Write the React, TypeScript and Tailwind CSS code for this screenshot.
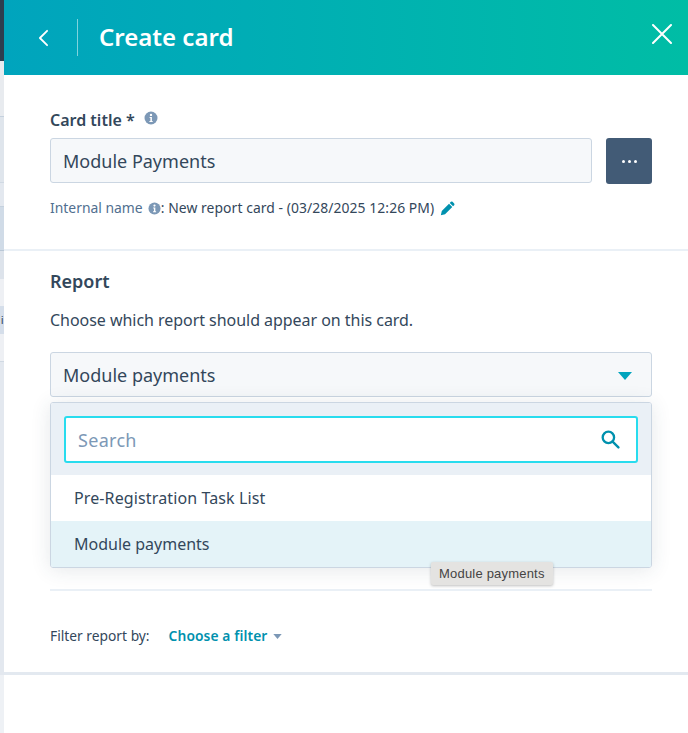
import React from "react";

const font = "font-['Noto_Sans','Open_Sans',sans-serif]";

function Info({ className }: { className: string }) {
  return (
    <svg viewBox="0 0 14 14" className={className}>
      <circle cx="7" cy="7" r="6.5" fill="currentColor" />
      <circle cx="7" cy="3.9" r="1.2" fill="#fff" />
      <path d="M5.6 6h2.3v4h.8v1.1H5.4V10h1V7.1h-.8z" fill="#fff" />
    </svg>
  );
}

function Strip() {
  return (
    <div className="w-1 shrink-0 flex flex-col overflow-hidden">
      <div className="h-[61px] bg-[#2d3e50] shrink-0" />
      <div className="h-[56px] bg-[#e8ebef] border-b border-[#c5d1de] shrink-0" />
      <div className="h-[66px] bg-[#dfe5ec] border-b border-[#d0d9e3] shrink-0" />
      <div className="h-[24px] bg-[#e3e8ef] border-b border-[#c5d1de] shrink-0" />
      <div className="h-[44px] bg-[#d0dbe7] border-b border-[#b9c7d6] shrink-0" />
      <div className="h-[28px] bg-[#dde3eb] shrink-0" />
      <div className="h-[27px] bg-[#eef0f4] shrink-0" />
      <div className="h-[28px] bg-[#d5deea] shrink-0 text-[11px] leading-[28px] text-[#33475b] font-['Liberation_Sans',sans-serif] pl-px">i</div>
      <div className="h-[28px] bg-[#eef0f4] border-b border-[#d0d9e3] shrink-0" />
      <div className="h-[313px] bg-[#e3e8ef] shrink-0" />
      <div className="flex-1 bg-[#eef1f5]" />
    </div>
  );
}

export default function App() {
  return (
    <div className={`${font} w-[688px] h-[733px] flex overflow-hidden bg-white text-[#33475b]`}>
      <Strip />
      <div className="flex-1 min-w-0 flex flex-col">
        <header className="h-[75px] shrink-0 flex items-center bg-gradient-to-r from-[#00a4bd] to-[#00bda5] text-white relative">
          <svg viewBox="0 0 12 20" className="w-[11px] h-[18px] ml-[34px]" fill="none" stroke="currentColor" strokeWidth="2" strokeLinecap="round" strokeLinejoin="round">
            <path d="M10 2 2 10l8 8" />
          </svg>
          <div className="w-px h-[37px] bg-white/50 ml-[28px]" />
          <h1 className="ml-[21px] text-[24px] leading-none font-semibold -mt-[2px]">Create card</h1>
          <svg viewBox="0 0 20 20" className="absolute right-[16px] top-[24px] w-5 h-5" fill="none" stroke="currentColor" strokeWidth="2" strokeLinecap="round">
            <path d="M1 1l18 18M19 1 1 19" />
          </svg>
        </header>

        <section className="h-[176px] shrink-0 border-b-2 border-[#eaf0f6] pl-[46px] pr-9 pt-[35px]">
          <div className="flex items-center h-5 text-[16px] font-semibold">
            Card title *
            <Info className="w-[14px] h-[14px] ml-[9px] -mt-1 text-[#7c98b6]" />
          </div>
          <div className="flex gap-[14px] mt-[8px]">
            <div className="flex-1 h-[45px] flex items-center px-3 pt-0.5 rounded-[3px] border border-[#cbd6e2] bg-[#f6f8fa] text-[18px]">
              Module Payments
            </div>
            <button className="w-[46px] h-[46px] rounded-[3px] bg-[#425b76] flex items-center justify-center gap-[3px]">
              <span className="w-[3px] h-[3px] rounded-full bg-white" />
              <span className="w-[3px] h-[3px] rounded-full bg-white" />
              <span className="w-[3px] h-[3px] rounded-full bg-white" />
            </button>
          </div>
          <div className="flex items-center mt-[14px] h-5 text-[13.9px]">
            <span className="text-[#516f90]">Internal name</span>
            <Info className="w-[13px] h-[13px] ml-[5px] text-[#7c98b6]" />
            <span className="tracking-[0.07px]">: New report card - (03/28/2025 12:26 PM)</span>
            <svg viewBox="0 0 16 16" className="w-[15px] h-[15px] ml-[6px] text-[#0091ae]" fill="currentColor">
              <path d="M11.6.9a1.3 1.3 0 0 1 1.8 0l1.7 1.7a1.3 1.3 0 0 1 0 1.8l-1.2 1.2-3.5-3.5zM9.6 2.9l3.5 3.5-7.7 7.7-4.5 1 1-4.5z" />
            </svg>
          </div>
        </section>

        <section className="h-[424px] shrink-0 border-b-[3px] border-[#e3e9f0] pl-[46px] pr-9 pt-[20px] relative">
          <div className="h-5 flex items-center text-[18px] font-semibold">Report</div>
          <p className="mt-[19px] h-5 flex items-center text-[16px] tracking-[-0.04px]">Choose which report should appear on this card.</p>
          <div className="mt-[22px] h-[45px] flex items-center justify-between pl-3 pr-[19px] pt-0.5 rounded-[3px] border border-[#cbd6e2] bg-[#f6f8fa] text-[18px]">
            Module payments
            <svg viewBox="0 0 14 8" className="w-[14px] h-[8px] text-[#00a4bd]" fill="currentColor">
              <path d="M0 0h14L7 8z" />
            </svg>
          </div>
          <div className="mt-[5px] rounded-[3px] border border-[#cbd6e2] overflow-hidden shadow-[0_2px_20px_rgba(45,62,80,0.12)]">
            <div className="h-[72px] bg-[#eaf0f6] px-[13px] pt-[13px]">
              <div className="h-[47px] rounded-[3px] border-2 border-[#28dcee] bg-white flex items-center justify-between pl-[12px] pr-[16px] text-[18px] text-[#7c98b6]">
                <span className="tracking-[0.3px] pt-0.5">Search</span>
                <svg viewBox="0 0 18 18" className="w-[19px] h-[19px] text-[#0091ae]" fill="none" stroke="currentColor" strokeWidth="2.2" strokeLinecap="round">
                  <circle cx="7" cy="7" r="5.4" />
                  <path d="M11 11l5.5 5.5" />
                </svg>
              </div>
            </div>
            <div className="h-[46px] bg-white flex items-center pl-[23px] text-[16px] tracking-[0.12px]">Pre-Registration Task List</div>
            <div className="h-[46px] bg-[#e4f3f8] flex items-center pl-[23px] text-[16px]">Module payments</div>
          </div>
          <div className="mt-[21px] h-0.5 bg-[#eaf0f6]" />
          <div className="mt-[35px] flex items-center h-5 text-[13.8px]">
            Filter report by:
            <span className="ml-[19px] font-semibold text-[#0091ae] tracking-[0.1px]">Choose a filter</span>
            <svg viewBox="0 0 10 6" className="w-[9px] h-[5px] ml-[6px] text-[#7c98b6]" fill="currentColor">
              <path d="M0 0h10L5 6z" />
            </svg>
          </div>
          <div className="absolute left-[427px] top-[311px] h-[23px] px-2 flex items-center rounded-[2px] bg-[#e4e3e1] shadow-[0_1px_3px_rgba(0,0,0,0.25)] font-['Liberation_Sans',sans-serif] text-[13px] tracking-[0.2px] text-[#444]">
            Module payments
          </div>
        </section>
        <div className="flex-1 bg-white" />
      </div>
    </div>
  );
}
